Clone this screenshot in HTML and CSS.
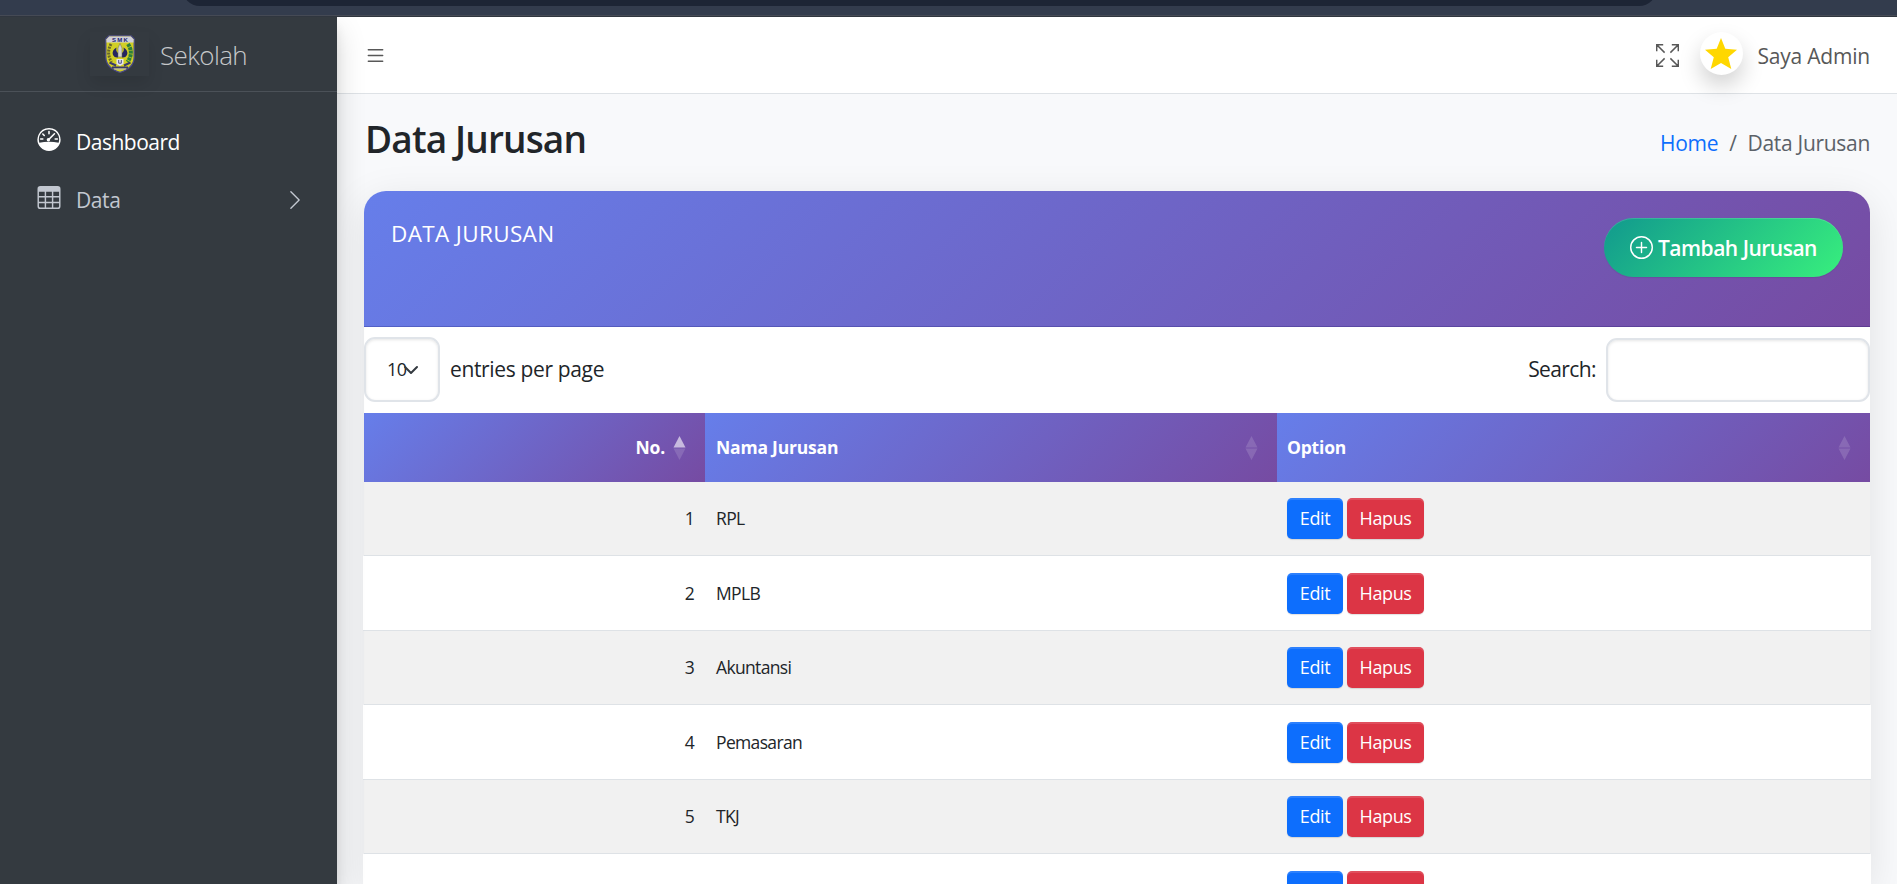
FILE: index.html
```
<!DOCTYPE html>
<html lang="id">
<head>
<meta charset="utf-8">
<title>Data Jurusan</title>
<link rel="stylesheet" href="styles.css">
</head>
<body>
<div class="chrome"><div class="address"></div></div>
<div class="app">
  <aside class="sidebar">
    <div class="brand">
      <div class="brand-logo">
        <svg width="30" height="38" viewBox="0 0 30 38">
          <path d="M4 .8H26L29.2 4V22C29 30 23 35 15 37.4 7 35 1 30 .8 22V4Z" fill="#d2cf25" stroke="#4a4a88" stroke-width="1.3"/>
          <path d="M4.2 1.5H25.8L28.5 4.2V7.6H1.5V4.2Z" fill="#cfcfda"/>
          <text x="15.500" y="6.9" class="crest-text">SMK</text>
          <path d="M6 9Q1 18 6.500 27" fill="none" stroke="#66662c" stroke-width="3" stroke-dasharray="2 1"/>
          <path d="M23 9Q29 18 22.500 27" fill="none" stroke="#2c7f3c" stroke-width="4" stroke-dasharray="3 .6"/>
          <path d="M11.500 12.500Q6.500 15 8 20 9.500 23 13 22.500V18Q10.500 16 11.500 12.500ZM18.500 12.500Q23.500 15 22 20 20.500 23 17 22.500V18Q19.500 16 18.500 12.500Z" fill="#262660"/>
          <path d="M13 22V13L15 8.500 17 13V22Z" fill="#d2d2cc" stroke="#6b6b45" stroke-width=".5"/>
          <path d="M11.5 24H18.5V29L15 31 11.5 29Z" fill="#e4e4ee"/>
          <path d="M13.7 25V28.2H16.3V25" fill="none" stroke="#4a4a88"/>
          <path d="M4.500 27.500 11 30.500M25.500 27.500 19 30.500M7 32.500H23" fill="none" stroke="#3a3a6c" stroke-width="2"/>
          <path d="M9 34H21" fill="none" stroke="#b8b8c4"/>
        </svg>
      </div>
      <span class="brand-name">Sekolah</span>
    </div>
    <nav class="menu">
      <a class="menu-item active">
        <svg class="menu-icon" viewBox="0 0 16 16" fill="currentColor"><path fill-rule="evenodd" d="M8 0a8 8 0 0 1 5.700 13.600Q11.5 16 8 16T2.300 13.600A8 8 0 0 1 8 0ZM8 1.100A6.900 6.900 0 0 0 1.300 10.200Q4.500 9.500 8 9.500T14.700 10.200A6.900 6.900 0 0 0 8 1.100Z"/><g fill="none" stroke="currentColor" stroke-linecap="round"><path d="M8 2.500V4M3.700 4.200 4.700 5.200M2.200 7.700H3.700M12.300 7.700H13.800M7.300 8.500 11.800 4" stroke-width="1.100"/></g><circle cx="7.600" cy="8.200" r="1.200"/></svg>
        <span class="t-dashboard">Dashboard</span>
      </a>
      <a class="menu-item">
        <svg class="menu-icon" viewBox="0 0 16 16" fill="currentColor"><path d="M0 2a2 2 0 0 1 2-2h12a2 2 0 0 1 2 2v12a2 2 0 0 1-2 2H2a2 2 0 0 1-2-2zm15 2h-4v3h4zm0 4h-4v3h4zm0 4h-4v3h3a1 1 0 0 0 1-1zm-5 3v-3H6v3zm-5 0v-3H1v2a1 1 0 0 0 1 1zm-4-4h4V8H1zm0-4h4V4H1zm5-3v3h4V4zm4 4H6v3h4z"/></svg>
        <span class="t-data">Data</span>
        <svg class="chevron" viewBox="0 0 16 16" fill="currentColor"><path fill-rule="evenodd" d="M4.646 1.646a.5.5 0 0 1 .708 0l6 6a.5.5 0 0 1 0 .708l-6 6a.5.5 0 0 1-.708-.708L10.293 8 4.646 2.354a.5.5 0 0 1 0-.708"/></svg>
      </a>
    </nav>
  </aside>
  <main class="main">
    <header class="navbar">
      <svg class="burger" viewBox="0 0 16 16" fill="currentColor"><path fill-rule="evenodd" d="M2.500 12a.5.5 0 0 1 .5-.5h10a.5.5 0 0 1 0 1H3a.5.5 0 0 1-.5-.5m0-4a.5.5 0 0 1 .5-.5h10a.5.5 0 0 1 0 1H3a.5.5 0 0 1-.5-.5m0-4a.5.5 0 0 1 .5-.5h10a.5.5 0 0 1 0 1H3a.5.5 0 0 1-.5-.5"/></svg>
      <div class="user">
        <svg class="expand" viewBox="0 0 16 16" fill="none" stroke="currentColor"><path d="M.5 5V.5H5M.5.5 6 6M11 .5H15.500V5M15.500.5 10 6M.5 11V15.500H5M.5 15.500 6 10M15.500 11V15.500H11M15.500 15.500 10 10"/></svg>
        <div class="avatar"><svg width="32" height="31" viewBox="0 0 32 31"><path d="M16 0 20.300 10.800 32 11.700 23.200 19.300 26.300 31 16 25 5.700 31 8.800 19.300 0 11.700 11.700 10.800Z" fill="#ffd700"/></svg></div>
        <span class="t-user">Saya Admin</span>
      </div>
    </header>
    <div class="page-head">
      <h3 class="page-title">Data Jurusan</h3>
      <div class="crumbs"><a class="crumb-home">Home</a><span class="crumb-sep">/</span><span class="crumb-here">Data Jurusan</span></div>
    </div>
    <section class="card">
      <div class="card-header">
        <span class="card-title">DATA JURUSAN</span>
        <button class="add"><svg class="plus" viewBox="0 0 16 16" fill="currentColor"><path d="M8 15A7 7 0 1 1 8 1a7 7 0 0 1 0 14m0 1A8 8 0 1 0 8 0a8 8 0 0 0 0 16"/><path d="M8 4a.5.5 0 0 1 .5.5v3h3a.5.5 0 0 1 0 1h-3v3a.5.5 0 0 1-1 0v-3h-3a.5.5 0 0 1 0-1h3v-3A.5.5 0 0 1 8 4"/></svg><span>Tambah Jurusan</span></button>
      </div>
      <div class="tools">
        <div class="length">10<svg class="caret" viewBox="0 0 16 16" fill="none" stroke="#343a40" stroke-width="2" stroke-linecap="round" stroke-linejoin="round"><path d="m2 5 6 6 6-6"/></svg></div>
        <span class="t-entries">entries per page</span>
        <span class="t-search">Search:</span>
        <input class="search" type="text">
      </div>
      <div class="thead">
        <div class="th num"><span class="t-no">No.</span><svg class="sort" viewBox="0 0 12 24" fill="#fff"><path d="M6 0 12 11.500H0Z" opacity=".6"/><path d="M0 12.500H12L6 24Z" opacity=".14"/></svg></div>
        <div class="th"><span class="t-nama">Nama Jurusan</span><svg class="sort" viewBox="0 0 12 24" fill="#fff" opacity=".14"><path d="M6 0 12 11.500H0ZM0 12.500H12L6 24Z"/></svg></div>
        <div class="th opt"><span class="t-option">Option</span><svg class="sort" viewBox="0 0 12 24" fill="#fff" opacity=".14"><path d="M6 0 12 11.500H0ZM0 12.500H12L6 24Z"/></svg></div>
      </div>
      <div class="row"><div class="td num">1</div><div class="td">RPL</div><div class="td opts"><a class="btn edit">Edit</a><a class="btn hapus">Hapus</a></div></div>
      <div class="row even"><div class="td num">2</div><div class="td">MPLB</div><div class="td opts"><a class="btn edit">Edit</a><a class="btn hapus">Hapus</a></div></div>
      <div class="row"><div class="td num">3</div><div class="td">Akuntansi</div><div class="td opts"><a class="btn edit">Edit</a><a class="btn hapus">Hapus</a></div></div>
      <div class="row even"><div class="td num">4</div><div class="td">Pemasaran</div><div class="td opts"><a class="btn edit">Edit</a><a class="btn hapus">Hapus</a></div></div>
      <div class="row"><div class="td num">5</div><div class="td">TKJ</div><div class="td opts"><a class="btn edit">Edit</a><a class="btn hapus">Hapus</a></div></div>
      <div class="row even last"><div class="td num"></div><div class="td"></div><div class="td opts"><a class="btn edit"></a><a class="btn hapus"></a></div></div>
    </section>
  </main>
</div>
</body>
</html>
```
FILE: styles.css
```
* { box-sizing: border-box; }
body {
  margin: 0;
  width: 1897px;
  height: 884px;
  overflow: hidden;
  background: #f8f9fb;
  color: #212529;
  font: 21px/33px "Open Sans", "Noto Sans", sans-serif;
}
svg { flex: none; display: block; }

.chrome { height: 17px; overflow: hidden; background: #333c4d; border-bottom: 1px solid #30363f; box-shadow: inset 0 -1px #454a55; }
.address { width: 1475px; height: 36px; margin: -30px 0 0 182px; background: #1d2535; border-radius: 18px; }
.app { display: flex; height: 867px; overflow: hidden; }

.sidebar {
  position: relative;
  z-index: 2;
  width: 337px;
  flex: none;
  background: #343a40;
  color: #c2c7d0;
  box-shadow: 0 14px 28px rgba(0,0,0,.16), 0 10px 10px rgba(0,0,0,.08);
}
.brand { display: flex; align-items: center; height: 75px; padding-left: 90px; border-bottom: 1px solid #4b5158; }
.brand-logo { display: flex; justify-content: center; width: 59px; height: 44px; padding-top: 3px; box-shadow: 0 8px 16px rgba(0,0,0,.1); }
.crest-text { font: bold 6px "Liberation Sans", sans-serif; letter-spacing: 1.2px; fill: #24246c; text-anchor: middle; }
.brand-name { margin-left: 11px; padding-top: 2px; font-size: 26px; font-weight: 300; letter-spacing: -.6px; color: #c6c8ca; }
.menu { padding: 20px 22px; }
.menu-item { display: flex; align-items: center; height: 58px; padding-left: 15px; }
.menu-item.active { color: #fff; }
.menu-icon { width: 24px; height: 23px; margin: -3px 15px 0 0; }
.chevron { width: 22px; height: 22px; margin-left: auto; margin-right: 9px; margin-top: 2px; }
.t-dashboard { padding-top: 2px; letter-spacing: -.5px; }
.t-data { padding-top: 2px; letter-spacing: -.4px; }

.main { flex: 1; min-width: 0; }
.navbar { display: flex; align-items: center; justify-content: space-between; height: 77px; padding: 0 27px 0 27px; background: #fff; border-bottom: 1px solid #dee2e6; color: #585858; }
.burger { width: 23px; height: 23px; }
.user { display: flex; align-items: center; }
.expand { width: 23px; height: 23px; margin-right: 21px; }
.avatar { width: 43px; height: 43px; margin: -4px 14px 0 0; padding: 6px 0 0 5px; border-radius: 50%; background: #fff; box-shadow: 0 11px 22px rgba(0,0,0,.18); }
.t-user { padding-top: 2px; letter-spacing: -.2px; }

.page-head { display: flex; justify-content: space-between; height: 97px; padding: 22px 27px 0 28px; }
.page-title { margin: 0; font-size: 37px; font-weight: 600; line-height: 46px; letter-spacing: -.85px; }
.crumbs { display: flex; padding-top: 11px; color: #5b6168; letter-spacing: -.3px; }
.crumb-home { color: #0d6efd; }
.crumb-sep { margin: 0 11px; }

.card { width: 1506px; margin-left: 27px; height: 693px; background: #fff; border-radius: 22px 22px 0 0; box-shadow: 0 10px 40px rgba(0,0,0,.1); }
.card-header { display: flex; justify-content: space-between; align-items: flex-start; height: 136px; padding: 27px 27px 0 27px; border-radius: 22px 22px 0 0; border-bottom: 1px solid rgba(0,0,80,.2); background: linear-gradient(135deg, #667eea, #764ba2) border-box; color: #fff; }
.card-title { font-size: 22.5px; line-height: 31px; letter-spacing: .35px; }
.add { display: flex; align-items: center; gap: 5px; width: 239px; height: 59px; padding: 0 0 0 26px; border: 0; border-radius: 30px; background: linear-gradient(135deg, #11998e, #38ef7d); color: #fff; font: 600 21px "Open Sans", sans-serif; letter-spacing: -.5px; white-space: nowrap; box-shadow: inset 0 1px rgba(255,255,255,.15), 0 1px 1px rgba(0,0,0,.075); }
.plus { width: 23px; height: 23px; }

.tools { display: flex; align-items: center; height: 86px; }
.length { display: flex; align-items: center; width: 76px; height: 65px; margin-top: -1px; padding-left: 21px; border: 2px solid #e0e4e9; border-radius: 11px; font-size: 18px; letter-spacing: -.5px; box-shadow: inset 0 1px 3px rgba(0,0,0,.1); }
.caret { width: 16px; height: 16px; margin-left: -4px; }
.t-entries { margin: -2px 0 0 10px; letter-spacing: -.35px; }
.t-search { margin: -2px 10px 0 auto; letter-spacing: -.6px; }
.search { width: 264px; height: 64px; border: 2px solid #e0e4e9; border-radius: 11px; background: #fff; box-shadow: inset 0 1px 3px rgba(0,0,0,.1); }

.thead, .row { display: grid; grid-template-columns: 341px 572px 593px; }
.th { display: flex; align-items: center; justify-content: space-between; height: 69px; padding: 0 19px 0 11px; background: linear-gradient(135deg, #667eea, #764ba2); color: #fff; font-size: 17.5px; font-weight: 700; }
.th.num { justify-content: flex-end; gap: 8px; }
.th.opt { padding-left: 10px; }
.sort { width: 13px; height: 24px; }
.t-nama, .t-no, .t-option { letter-spacing: -.2px; }
.row { height: 74px; background: #f1f1f1; border-bottom: 1px solid #dee2e6; font-size: 17.5px; letter-spacing: -.65px; }
.row.even { height: 75px; margin: 0 -1px; padding: 0 1px; background: #fff; }
.row.last { height: 30px; border: 0; overflow: hidden; }
.td { display: flex; align-items: center; padding: 0 11px; }
.td.num { justify-content: flex-end; }
.td.opts { align-items: flex-start; gap: 4px; padding: 16px 0 0 10px; }
.even .opts { padding-top: 17px; }
.btn { display: flex; align-items: center; justify-content: center; height: 41px; border-radius: 5px; color: #fff; font-size: 18px; letter-spacing: -.4px; box-shadow: inset 0 2px rgba(255,255,255,.13), 0 1px 1px rgba(0,0,0,.12); }
.edit { width: 56px; background: #0d6efd; }
.hapus { width: 77px; background: #dc3545; }
```
